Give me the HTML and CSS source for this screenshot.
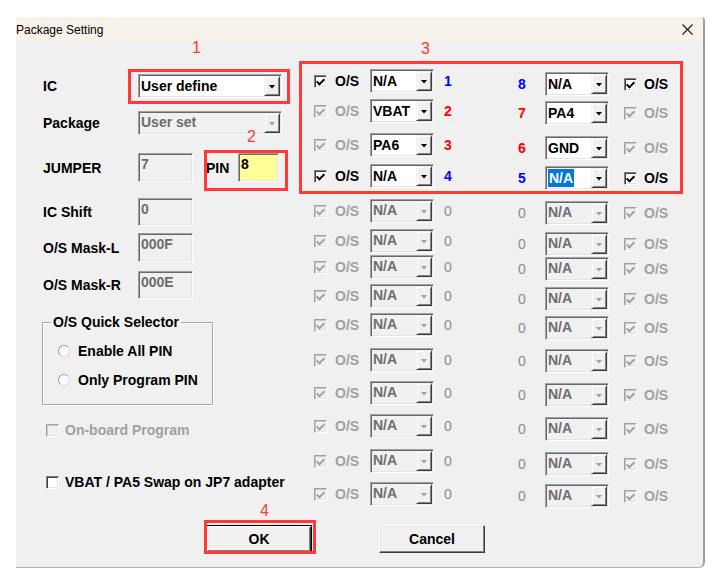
FILE: index.html
```html
<!DOCTYPE html>
<html>
<head>
<meta charset="utf-8">
<title>Package Setting</title>
<link rel="stylesheet" href="styles.css">
</head>
<body>
<div class="window">
  <div class="titlebar">
    <span class="title">Package Setting</span>
    <svg class="close" width="11" height="11" viewBox="0 0 11 11"><path d="M0.5 0.5 L10.5 10.5 M10.5 0.5 L0.5 10.5" stroke="#1a1a1a" stroke-width="1.1" fill="none"/></svg>
  </div>
  <div class="content">
    <div class="top">
      <div class="leftcol">
        <div class="frow r-ic"><span class="lbl">IC</span><div class="combo wide"><span class="val">User define</span><span class="dd"></span></div></div>
        <div class="frow r-pkg"><span class="lbl">Package</span><div class="combo wide dis"><span class="val">User set</span><span class="dd"></span></div></div>
        <div class="frow r-jmp"><span class="lbl">JUMPER</span><div class="tb">7</div><span class="pinlbl">PIN</span><div class="tb pin">8</div></div>
        <div class="frow r-shift"><span class="lbl">IC Shift</span><div class="tb">0</div></div>
        <div class="frow r-maskl"><span class="lbl">O/S Mask-L</span><div class="tb">000F</div></div>
        <div class="frow r-maskr"><span class="lbl">O/S Mask-R</span><div class="tb">000E</div></div>
        <div class="group">
          <span class="gtitle">O/S Quick Selector</span>
          <div class="radrow"><span class="radio"></span><span>Enable All PIN</span></div>
          <div class="radrow"><span class="radio"></span><span>Only Program PIN</span></div>
        </div>
        <div class="crow r-onb"><span class="chk off dis"></span><span class="distext">On-board Program</span></div>
        <div class="crow r-vbat"><span class="chk off"></span><span>VBAT / PA5 Swap on JP7 adapter</span></div>
      </div>
      <div class="rightpanel">
        <div class="half lhalf">
          <div class="prow"><span class="chk"></span><span class="os">O/S</span><div class="combo"><span class="val">N/A</span><span class="dd"></span></div><span class="num blue">1</span></div>
          <div class="prow"><span class="chk dis"></span><span class="os distext">O/S</span><div class="combo"><span class="val">VBAT</span><span class="dd"></span></div><span class="num red">2</span></div>
          <div class="prow"><span class="chk dis"></span><span class="os distext">O/S</span><div class="combo"><span class="val">PA6</span><span class="dd"></span></div><span class="num red">3</span></div>
          <div class="prow"><span class="chk"></span><span class="os">O/S</span><div class="combo"><span class="val">N/A</span><span class="dd"></span></div><span class="num blue">4</span></div>
          <div class="prow"><span class="chk dis"></span><span class="os distext">O/S</span><div class="combo dis"><span class="val">N/A</span><span class="dd"></span></div><span class="num zero">0</span></div>
          <div class="prow"><span class="chk dis"></span><span class="os distext">O/S</span><div class="combo dis"><span class="val">N/A</span><span class="dd"></span></div><span class="num zero">0</span></div>
          <div class="prow"><span class="chk dis"></span><span class="os distext">O/S</span><div class="combo dis"><span class="val">N/A</span><span class="dd"></span></div><span class="num zero">0</span></div>
          <div class="prow"><span class="chk dis"></span><span class="os distext">O/S</span><div class="combo dis"><span class="val">N/A</span><span class="dd"></span></div><span class="num zero">0</span></div>
          <div class="prow"><span class="chk dis"></span><span class="os distext">O/S</span><div class="combo dis"><span class="val">N/A</span><span class="dd"></span></div><span class="num zero">0</span></div>
          <div class="prow"><span class="chk dis"></span><span class="os distext">O/S</span><div class="combo dis"><span class="val">N/A</span><span class="dd"></span></div><span class="num zero">0</span></div>
          <div class="prow"><span class="chk dis"></span><span class="os distext">O/S</span><div class="combo dis"><span class="val">N/A</span><span class="dd"></span></div><span class="num zero">0</span></div>
          <div class="prow"><span class="chk dis"></span><span class="os distext">O/S</span><div class="combo dis"><span class="val">N/A</span><span class="dd"></span></div><span class="num zero">0</span></div>
          <div class="prow"><span class="chk dis"></span><span class="os distext">O/S</span><div class="combo dis"><span class="val">N/A</span><span class="dd"></span></div><span class="num zero">0</span></div>
          <div class="prow"><span class="chk dis"></span><span class="os distext">O/S</span><div class="combo dis"><span class="val">N/A</span><span class="dd"></span></div><span class="num zero">0</span></div>
        </div>
        <div class="half rhalf">
          <div class="prow"><span class="rnum blue">8</span><div class="combo"><span class="val">N/A</span><span class="dd"></span></div><span class="chk rchk"></span><span class="os2">O/S</span></div>
          <div class="prow"><span class="rnum red">7</span><div class="combo"><span class="val">PA4</span><span class="dd"></span></div><span class="chk rchk dis"></span><span class="os2 distext">O/S</span></div>
          <div class="prow"><span class="rnum red">6</span><div class="combo"><span class="val">GND</span><span class="dd"></span></div><span class="chk rchk dis"></span><span class="os2 distext">O/S</span></div>
          <div class="prow"><span class="rnum blue">5</span><div class="combo"><span class="val"><span class="sel">N/A</span></span><span class="dd"></span></div><span class="chk rchk"></span><span class="os2">O/S</span></div>
          <div class="prow"><span class="rnum zero">0</span><div class="combo dis"><span class="val">N/A</span><span class="dd"></span></div><span class="chk rchk dis"></span><span class="os2 distext">O/S</span></div>
          <div class="prow"><span class="rnum zero">0</span><div class="combo dis"><span class="val">N/A</span><span class="dd"></span></div><span class="chk rchk dis"></span><span class="os2 distext">O/S</span></div>
          <div class="prow"><span class="rnum zero">0</span><div class="combo dis"><span class="val">N/A</span><span class="dd"></span></div><span class="chk rchk dis"></span><span class="os2 distext">O/S</span></div>
          <div class="prow"><span class="rnum zero">0</span><div class="combo dis"><span class="val">N/A</span><span class="dd"></span></div><span class="chk rchk dis"></span><span class="os2 distext">O/S</span></div>
          <div class="prow"><span class="rnum zero">0</span><div class="combo dis"><span class="val">N/A</span><span class="dd"></span></div><span class="chk rchk dis"></span><span class="os2 distext">O/S</span></div>
          <div class="prow"><span class="rnum zero">0</span><div class="combo dis"><span class="val">N/A</span><span class="dd"></span></div><span class="chk rchk dis"></span><span class="os2 distext">O/S</span></div>
          <div class="prow"><span class="rnum zero">0</span><div class="combo dis"><span class="val">N/A</span><span class="dd"></span></div><span class="chk rchk dis"></span><span class="os2 distext">O/S</span></div>
          <div class="prow"><span class="rnum zero">0</span><div class="combo dis"><span class="val">N/A</span><span class="dd"></span></div><span class="chk rchk dis"></span><span class="os2 distext">O/S</span></div>
          <div class="prow"><span class="rnum zero">0</span><div class="combo dis"><span class="val">N/A</span><span class="dd"></span></div><span class="chk rchk dis"></span><span class="os2 distext">O/S</span></div>
          <div class="prow"><span class="rnum zero">0</span><div class="combo dis"><span class="val">N/A</span><span class="dd"></span></div><span class="chk rchk dis"></span><span class="os2 distext">O/S</span></div>
        </div>
      </div>
    </div>
    <div class="buttons">
      <button class="btn def">OK</button>
      <button class="btn">Cancel</button>
    </div>
  </div>

  <div class="ann ann1"></div>
  <div class="ann ann2"></div>
  <div class="ann ann3"></div>
  <div class="ann ann4"></div>
  <span class="anum an1">1</span>
  <span class="anum an2">2</span>
  <span class="anum an3">3</span>
  <span class="anum an4">4</span>
</div>
</body>
</html>
```

FILE: styles.css
```css
* { box-sizing: border-box; }

body {
  margin: 0;
  background: #ffffff;
  font-family: "Liberation Sans", Arial, sans-serif;
}

.window {
  position: relative;
  margin: 17px 0 0 16px;
  width: 689px;
  height: 551px;
  background: #f0f0f0;
  border-right: 2px solid #9c9c9c;
  border-bottom: 1px solid #b0b0b0;
  border-top-right-radius: 4px;
  border-bottom-right-radius: 6px;
}

.titlebar {
  height: 25px;
  background: #f8f1e9;
  display: flex;
  align-items: center;
  justify-content: space-between;
  padding-right: 10px;
  font-size: 12px;
  color: #000;
  border-top-right-radius: 4px;
}

.title { padding-top: 1px; }

.close { display: block; }

.content {
  font-weight: bold;
  font-size: 14px;
  line-height: 16px;
  color: #000;
}

.top {
  display: flex;
  height: 466px;
}

/* ---------- left column ---------- */
.leftcol {
  width: 284px;
  padding-left: 27px;
  display: flex;
  flex-direction: column;
  align-items: flex-start;
}

.frow { display: flex; align-items: center; }
.lbl { width: 95px; }

.r-ic { margin-top: 32px; height: 24px; }
.r-pkg { margin-top: 13px; height: 24px; }
.r-jmp { margin-top: 18px; height: 29px; }
.r-shift { margin-top: 16px; height: 28px; }
.r-maskl { margin-top: 7px; height: 29px; }
.r-maskr { margin-top: 9px; height: 28px; }

.pinlbl { width: 32px; margin-left: 13px; }

.tb {
  width: 55px;
  height: 100%;
  padding: 2px 0 0 2px;
  color: #6d6d6d;
  background: #f0f0f0;
  border: 1px solid;
  border-color: #a0a0a0 #ffffff #ffffff #a0a0a0;
  box-shadow: inset 1px 1px #696969, inset -1px -1px #e3e3e3;
}
.tb.pin {
  width: 41px;
  background: #ffff99;
  color: #000;
}

.group {
  margin-top: 23px;
  margin-left: -1px;
  width: 171px;
  height: 83px;
  border: 1px solid #a8a8a8;
  box-shadow: inset 1px 1px #ffffff, 1px 1px #ffffff;
  display: flex;
  flex-direction: column;
  align-items: flex-start;
}
.gtitle {
  margin-top: -9px;
  margin-left: 8px;
  padding: 0 2px;
  background: #f0f0f0;
  line-height: 16px;
}
.radrow {
  display: flex;
  align-items: center;
  height: 16px;
  margin-top: 13px;
  margin-left: 15px;
}
.radio {
  width: 12px;
  height: 12px;
  border-radius: 50%;
  background: #fbfbfb;
  border: 1px solid;
  border-color: #9a9a9a #dadada #dadada #9a9a9a;
  margin-right: 8px;
}

.crow {
  display: flex;
  align-items: center;
  height: 16px;
  margin-left: 3px;
}
.crow .chk { margin-right: 6px; }
.r-onb { margin-top: 17px; }
.r-vbat { margin-top: 36px; }

.distext { color: #a0a0a0; }

/* ---------- checkboxes ---------- */
.chk {
  position: relative;
  display: inline-block;
  width: 13px;
  height: 13px;
  flex: none;
  background: #ffffff;
  border: 1px solid;
  border-color: #808080 #ffffff #ffffff #808080;
  box-shadow: inset 1px 1px #404040, inset -1px -1px #e3e3e3;
}
.chk::after {
  content: "";
  position: absolute;
  left: 3px;
  top: 1px;
  width: 3px;
  height: 6px;
  border: solid #000;
  border-width: 0 2px 2px 0;
  transform: rotate(45deg);
}
.chk.off::after { display: none; }
.chk.dis {
  background: #f0f0f0;
  border-color: #a0a0a0 #ffffff #ffffff #a0a0a0;
  box-shadow: inset 1px 1px #c8c8c8, inset -1px -1px #e3e3e3;
}
.chk.dis::after { border-color: #a0a0a0; }

/* ---------- combos ---------- */
.combo {
  display: flex;
  width: 64px;
  height: 24px;
  flex: none;
  background: #ffffff;
  border: 1px solid;
  border-color: #a0a0a0 #ffffff #ffffff #a0a0a0;
  box-shadow: inset 1px 1px #696969, inset -1px -1px #e3e3e3;
  padding: 1px;
}
.combo.wide { width: 144px; }
.combo .val {
  flex: 1;
  display: flex;
  align-items: center;
  padding-left: 1px;
  overflow: hidden;
  white-space: nowrap;
}
.combo .dd {
  width: 16px;
  height: 20px;
  flex: none;
  display: flex;
  align-items: center;
  justify-content: center;
  background: #f0f0f0;
  border: 1px solid;
  border-color: #f0f0f0 #404040 #404040 #f0f0f0;
  box-shadow: inset 1px 1px #ffffff, inset -1px -1px #808080;
}
.combo .dd::before {
  content: "";
  width: 7px;
  height: 4px;
  background: #000;
  clip-path: polygon(0 0, 100% 0, 50% 100%);
  margin-top: 1px;
}
.combo.dis { background: #f0f0f0; }
.combo.dis .val { color: #6d6d6d; align-items: flex-start; padding-top: 1px; }
.combo.dis .dd::before { background: #a0a0a0; }

.sel {
  background: #0078d7;
  color: #ffffff;
  padding: 1px 1px;
}

/* ---------- right panel ---------- */
.rightpanel {
  display: flex;
  padding-left: 14px;
}
.half {
  display: grid;
  align-content: start;
}
.lhalf {
  width: 204px;
  padding-top: 27px;
  grid-template-rows: 30px 34px 31px 35px 30px 26px 29px 29px 35px 33px 33px 35px 33px 24px;
}
.rhalf {
  padding-top: 30px;
  grid-template-rows: 29px 35px 30px 35px 31px 25px 30px 29px 33px 34px 34px 35px 32px 24px;
}
.prow {
  display: flex;
  align-items: center;
  height: 24px;
}
.os { width: 35px; margin-left: 8px; }
.num { margin-left: 10px; }
.rnum { width: 27px; }
.rchk { margin-left: 15px; }
.os2 { margin-left: 7px; }

.blue { color: #0000ff; }
.red { color: #ff0000; }
.zero { color: #8c8c8c; font-weight: normal; }

/* ---------- buttons ---------- */
.buttons {
  display: flex;
  gap: 67px;
  padding-left: 190px;
  margin-top: 17px;
}
.btn {
  width: 106px;
  height: 28px;
  padding: 0;
  font-family: "Liberation Sans", Arial, sans-serif;
  font-weight: bold;
  font-size: 14px;
  color: #000;
  background: #f0f0f0;
  border: 1px solid;
  border-color: #ffffff #404040 #404040 #ffffff;
  box-shadow: inset -1px -1px #808080, inset 1px 1px #e3e3e3;
}
.btn.def {
  border: 1px solid #000;
  box-shadow: inset 1px 1px #ffffff, inset -1px -1px #404040, inset -2px -2px #808080;
}

/* ---------- annotations (overlay) ---------- */
.ann {
  position: absolute;
  border: 3px solid #ff3838;
}
.ann1 { left: 112px; top: 52px; width: 162px; height: 35px; }
.ann2 { left: 188px; top: 133px; width: 84px; height: 41px; }
.ann3 { left: 283px; top: 44px; width: 384px; height: 133px; }
.ann4 { left: 188px; top: 503px; width: 112px; height: 34px; }

.anum {
  position: absolute;
  color: #ff3838;
  font-family: "Liberation Sans", Arial, sans-serif;
  font-size: 16px;
  line-height: 16px;
}
.an1 { left: 176px; top: 23px; }
.an2 { left: 231px; top: 112px; }
.an3 { left: 405px; top: 24px; }
.an4 { left: 244px; top: 486px; }
```
